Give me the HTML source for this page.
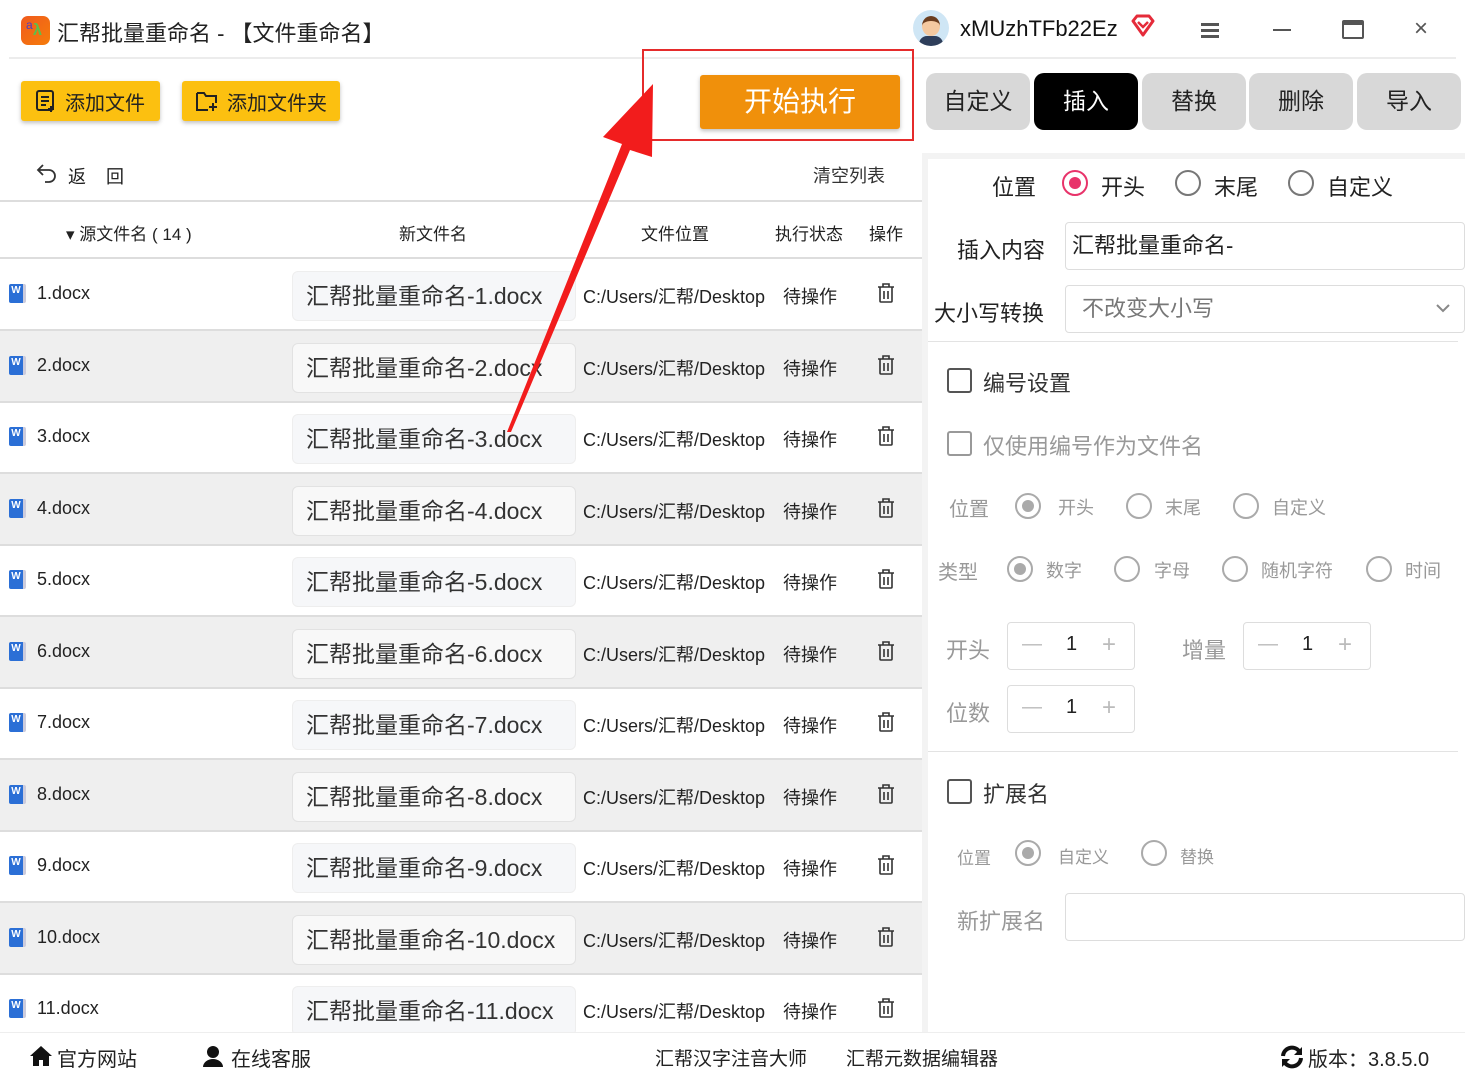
<!DOCTYPE html><html><head><meta charset="utf-8"><style>
*{margin:0;padding:0;box-sizing:border-box}
body{width:1465px;height:1080px;position:relative;overflow:hidden;background:#fff;font-family:"Liberation Sans","Noto Sans CJK SC",sans-serif;color:#222}
.a{position:absolute;white-space:nowrap}
.btnY{position:absolute;background:#fcc010;border-radius:3px;box-shadow:0 2px 4px rgba(0,0,0,.25);font-size:20px;display:flex;align-items:center;color:#222}
.row{position:absolute;left:0;width:922px;height:72px;border-bottom:2px solid #ddd}
.row.g{background:#efefef}
.row .ic{position:absolute;left:9px;top:25px;width:17px;height:19px;background:#2b6fd6;border-radius:2px;border-right:3px solid #ccd;color:#fff;font-size:10px;font-weight:bold;text-align:center;line-height:14px}
.row .fn{position:absolute;left:37px;top:24px;font-size:18px}
.row .nb{position:absolute;left:292px;top:12px;width:284px;height:50px;border-radius:6px;background:#f6f7f9;border:1px solid #eee;font-size:23px;padding-left:13px;line-height:48px;color:#333}
.row.g .nb{background:#f8f8f8;border-color:#e2e2e2}
.row .loc{position:absolute;left:583px;top:24px;font-size:18px}
.row .st{position:absolute;left:783px;top:24px;font-size:18px}
.row .tr{position:absolute;left:877px;top:24px}
.tab{position:absolute;top:73px;height:57px;width:104px;background:#d8d8d8;border-radius:10px;font-size:23px;text-align:center;line-height:57px;color:#222}
.rad{position:absolute;width:26px;height:26px;border:2.5px solid #777;border-radius:50%}
.rad.on{border-color:#e8336a}
.rad.on::after{content:"";position:absolute;left:4.5px;top:4.5px;width:12px;height:12px;border-radius:50%;background:#e8336a}
.rad.gr{border-color:#aaa}
.rad.gon{border-color:#aaa}
.rad.gon::after{content:"";position:absolute;left:4.5px;top:4.5px;width:12px;height:12px;border-radius:50%;background:#aaa}
.cb{position:absolute;width:25px;height:25px;border:2.5px solid #555;border-radius:3px}
.gray{color:#999}
.spin{position:absolute;width:128px;height:48px;border:1px solid #ddd;border-radius:4px;font-size:20px;color:#bbb}
.spin span{position:absolute;top:10px}
</style></head><body>
<!-- title bar -->
<div class="a" style="left:21px;top:16px;width:29px;height:29px;border-radius:7px;background:linear-gradient(135deg,#f05a1e,#f57c0a)"><span style="position:absolute;left:5px;top:2px;color:#4a3cc8;font-size:12px">a</span><span style="position:absolute;left:12px;top:6px;color:#5cc04a;font-size:16px;font-weight:bold">λ</span></div>
<div class="a" style="left:57px;top:16px;font-size:22px;color:#222">汇帮批量重命名 - 【文件重命名】</div>
<div class="a" style="left:913px;top:10px;width:36px;height:36px;border-radius:50%;background:#cfe6f5;overflow:hidden"><div style="position:absolute;left:9px;top:6px;width:18px;height:20px;border-radius:50%;background:#f4c9a0;border-top:5px solid #6b3d1e"></div><div style="position:absolute;left:6px;top:26px;width:24px;height:14px;border-radius:8px 8px 0 0;background:#2e3e5a"></div></div>
<div class="a" style="left:960px;top:16px;font-size:22px;color:#111">xMUzhTFb22Ez</div>
<svg class="a" style="left:1130px;top:13px" width="26" height="26" viewBox="0 0 26 26"><path d="M3 8 L7 3 H19 L23 8 L13 22 Z" fill="none" stroke="#e52b3a" stroke-width="3" stroke-linejoin="round"/><path d="M8 9 L13 14 L18 9" fill="none" stroke="#e52b3a" stroke-width="2.5"/></svg>
<div class="a" style="left:1201px;top:23px;width:18px;height:2.5px;background:#555;box-shadow:0 6px 0 #555,0 12px 0 #555"></div>
<div class="a" style="left:1273px;top:29px;width:18px;height:2px;background:#555"></div>
<div class="a" style="left:1342px;top:20px;width:22px;height:19px;border:2px solid #555;border-top-width:5px;border-radius:2px"></div>
<div class="a" style="left:1414px;top:15px;font-size:24px;color:#555">×</div>
<div class="a" style="left:9px;top:57px;width:1447px;height:2px;background:#ececec"></div>
<!-- buttons -->
<div class="btnY" style="left:21px;top:81px;width:139px;height:40px"><svg style="margin:0 8px 0 14px" width="22" height="24" viewBox="0 0 22 24"><rect x="2" y="2" width="16" height="19" rx="2" fill="none" stroke="#222" stroke-width="2"/><path d="M6 8h8M6 12h8M6 16h5M16 17v6M13 20h6" stroke="#222" stroke-width="2"/></svg>添加文件</div>
<div class="btnY" style="left:182px;top:81px;width:158px;height:40px"><svg style="margin:0 8px 0 13px" width="24" height="24" viewBox="0 0 24 24"><path d="M2 4h7l2 3h10v7M2 4v17h11" fill="none" stroke="#222" stroke-width="2"/><path d="M18 14v8M14 18h8" stroke="#222" stroke-width="2"/></svg>添加文件夹</div>
<div class="a" style="left:700px;top:75px;width:200px;height:54px;background:#f0900b;border-radius:3px;box-shadow:0 2px 4px rgba(0,0,0,.25);color:#fff;font-size:28px;text-align:center;line-height:54px">开始执行</div>
<div class="a" style="left:642px;top:49px;width:272px;height:92px;border:2px solid #e52b2b"></div>
<!-- back -->
<svg class="a" style="left:36px;top:163px" width="22" height="20" viewBox="0 0 22 20"><path d="M7 2 L2 7 L7 12 M2 7 H13 a6 6 0 0 1 0 12 H9" fill="none" stroke="#333" stroke-width="1.8"/></svg>
<div class="a" style="left:68px;top:163px;font-size:18px">返</div>
<div class="a" style="left:106px;top:163px;font-size:18px">回</div>
<div class="a" style="left:813px;top:162px;font-size:18px;color:#333">清空列表</div>
<div class="a" style="left:0;top:200px;width:922px;height:2px;background:#ddd"></div>
<div class="a" style="left:66px;top:220px;font-size:17px">▾ 源文件名 ( 14 )</div>
<div class="a" style="left:399px;top:220px;font-size:17px">新文件名</div>
<div class="a" style="left:641px;top:220px;font-size:17px">文件位置</div>
<div class="a" style="left:775px;top:220px;font-size:17px">执行状态</div>
<div class="a" style="left:869px;top:220px;font-size:17px">操作</div>
<div class="a" style="left:0;top:257px;width:922px;height:2px;background:#ddd"></div>
<!-- rows -->
<div class="row" style="top:259px"><div class="ic">W</div><div class="fn">1.docx</div><div class="nb">汇帮批量重命名-1.docx</div><div class="loc">C:/Users/汇帮/Desktop</div><div class="st">待操作</div><svg class="tr" width="18" height="20" viewBox="0 0 18 20"><path d="M1 4h16M6 4V1h6v3M3 4v14a1 1 0 0 0 1 1h10a1 1 0 0 0 1-1V4M7 8v8M11 8v8" fill="none" stroke="#333" stroke-width="1.6"/></svg></div>
<div class="row g" style="top:330.5px"><div class="ic">W</div><div class="fn">2.docx</div><div class="nb">汇帮批量重命名-2.docx</div><div class="loc">C:/Users/汇帮/Desktop</div><div class="st">待操作</div><svg class="tr" width="18" height="20" viewBox="0 0 18 20"><path d="M1 4h16M6 4V1h6v3M3 4v14a1 1 0 0 0 1 1h10a1 1 0 0 0 1-1V4M7 8v8M11 8v8" fill="none" stroke="#333" stroke-width="1.6"/></svg></div>
<div class="row" style="top:402px"><div class="ic">W</div><div class="fn">3.docx</div><div class="nb">汇帮批量重命名-3.docx</div><div class="loc">C:/Users/汇帮/Desktop</div><div class="st">待操作</div><svg class="tr" width="18" height="20" viewBox="0 0 18 20"><path d="M1 4h16M6 4V1h6v3M3 4v14a1 1 0 0 0 1 1h10a1 1 0 0 0 1-1V4M7 8v8M11 8v8" fill="none" stroke="#333" stroke-width="1.6"/></svg></div>
<div class="row g" style="top:473.5px"><div class="ic">W</div><div class="fn">4.docx</div><div class="nb">汇帮批量重命名-4.docx</div><div class="loc">C:/Users/汇帮/Desktop</div><div class="st">待操作</div><svg class="tr" width="18" height="20" viewBox="0 0 18 20"><path d="M1 4h16M6 4V1h6v3M3 4v14a1 1 0 0 0 1 1h10a1 1 0 0 0 1-1V4M7 8v8M11 8v8" fill="none" stroke="#333" stroke-width="1.6"/></svg></div>
<div class="row" style="top:545px"><div class="ic">W</div><div class="fn">5.docx</div><div class="nb">汇帮批量重命名-5.docx</div><div class="loc">C:/Users/汇帮/Desktop</div><div class="st">待操作</div><svg class="tr" width="18" height="20" viewBox="0 0 18 20"><path d="M1 4h16M6 4V1h6v3M3 4v14a1 1 0 0 0 1 1h10a1 1 0 0 0 1-1V4M7 8v8M11 8v8" fill="none" stroke="#333" stroke-width="1.6"/></svg></div>
<div class="row g" style="top:616.5px"><div class="ic">W</div><div class="fn">6.docx</div><div class="nb">汇帮批量重命名-6.docx</div><div class="loc">C:/Users/汇帮/Desktop</div><div class="st">待操作</div><svg class="tr" width="18" height="20" viewBox="0 0 18 20"><path d="M1 4h16M6 4V1h6v3M3 4v14a1 1 0 0 0 1 1h10a1 1 0 0 0 1-1V4M7 8v8M11 8v8" fill="none" stroke="#333" stroke-width="1.6"/></svg></div>
<div class="row" style="top:688px"><div class="ic">W</div><div class="fn">7.docx</div><div class="nb">汇帮批量重命名-7.docx</div><div class="loc">C:/Users/汇帮/Desktop</div><div class="st">待操作</div><svg class="tr" width="18" height="20" viewBox="0 0 18 20"><path d="M1 4h16M6 4V1h6v3M3 4v14a1 1 0 0 0 1 1h10a1 1 0 0 0 1-1V4M7 8v8M11 8v8" fill="none" stroke="#333" stroke-width="1.6"/></svg></div>
<div class="row g" style="top:759.5px"><div class="ic">W</div><div class="fn">8.docx</div><div class="nb">汇帮批量重命名-8.docx</div><div class="loc">C:/Users/汇帮/Desktop</div><div class="st">待操作</div><svg class="tr" width="18" height="20" viewBox="0 0 18 20"><path d="M1 4h16M6 4V1h6v3M3 4v14a1 1 0 0 0 1 1h10a1 1 0 0 0 1-1V4M7 8v8M11 8v8" fill="none" stroke="#333" stroke-width="1.6"/></svg></div>
<div class="row" style="top:831px"><div class="ic">W</div><div class="fn">9.docx</div><div class="nb">汇帮批量重命名-9.docx</div><div class="loc">C:/Users/汇帮/Desktop</div><div class="st">待操作</div><svg class="tr" width="18" height="20" viewBox="0 0 18 20"><path d="M1 4h16M6 4V1h6v3M3 4v14a1 1 0 0 0 1 1h10a1 1 0 0 0 1-1V4M7 8v8M11 8v8" fill="none" stroke="#333" stroke-width="1.6"/></svg></div>
<div class="row g" style="top:902.5px"><div class="ic">W</div><div class="fn">10.docx</div><div class="nb">汇帮批量重命名-10.docx</div><div class="loc">C:/Users/汇帮/Desktop</div><div class="st">待操作</div><svg class="tr" width="18" height="20" viewBox="0 0 18 20"><path d="M1 4h16M6 4V1h6v3M3 4v14a1 1 0 0 0 1 1h10a1 1 0 0 0 1-1V4M7 8v8M11 8v8" fill="none" stroke="#333" stroke-width="1.6"/></svg></div>
<div class="row" style="top:974px"><div class="ic">W</div><div class="fn">11.docx</div><div class="nb">汇帮批量重命名-11.docx</div><div class="loc">C:/Users/汇帮/Desktop</div><div class="st">待操作</div><svg class="tr" width="18" height="20" viewBox="0 0 18 20"><path d="M1 4h16M6 4V1h6v3M3 4v14a1 1 0 0 0 1 1h10a1 1 0 0 0 1-1V4M7 8v8M11 8v8" fill="none" stroke="#333" stroke-width="1.6"/></svg></div>
<!-- arrow -->
<svg class="a" style="left:0;top:0" width="922" height="460" viewBox="0 0 922 460"><polygon points="507,432 511,432 630,150 652,157 653,84 603,137 622,144" fill="#f21c1c"/></svg>
<!-- right panel -->
<div class="tab" style="left:926px">自定义</div>
<div class="tab" style="left:1034px;background:#000;color:#fff">插入</div>
<div class="tab" style="left:1142px">替换</div>
<div class="tab" style="left:1249px">删除</div>
<div class="tab" style="left:1357px">导入</div>
<div class="a" style="left:922px;top:153px;width:543px;height:880px;background:#f3f3f3"></div>
<div class="a" style="left:928px;top:159px;width:537px;height:873px;background:#fff"></div>
<div class="a" style="left:992px;top:170px;font-size:22px">位置</div>
<div class="rad on" style="left:1062px;top:170px"></div><div class="a" style="left:1101px;top:170px;font-size:22px">开头</div>
<div class="rad" style="left:1175px;top:170px"></div><div class="a" style="left:1214px;top:170px;font-size:22px">末尾</div>
<div class="rad" style="left:1288px;top:170px"></div><div class="a" style="left:1327px;top:170px;font-size:22px">自定义</div>
<div class="a" style="left:957px;top:233px;font-size:22px">插入内容</div>
<div class="a" style="left:1065px;top:222px;width:400px;height:48px;border:1px solid #ddd;border-radius:4px;font-size:22px;padding-left:6px;line-height:46px">汇帮批量重命名-</div>
<div class="a" style="left:934px;top:296px;font-size:22px">大小写转换</div>
<div class="a" style="left:1065px;top:285px;width:400px;height:48px;border:1px solid #ddd;border-radius:4px;font-size:22px;padding-left:16px;line-height:46px;color:#777">不改变大小写</div>
<svg class="a" style="left:1436px;top:303px" width="14" height="10" viewBox="0 0 14 10"><path d="M1 2 L7 8 L13 2" fill="none" stroke="#888" stroke-width="2"/></svg>
<div class="a" style="left:928px;top:341px;width:530px;height:1px;background:#e3e3e3"></div>
<div class="cb" style="left:947px;top:368px"></div><div class="a" style="left:983px;top:366px;font-size:22px;color:#333">编号设置</div>
<div class="cb" style="left:947px;top:431px;border-color:#999"></div><div class="a gray" style="left:983px;top:429px;font-size:22px">仅使用编号作为文件名</div>
<div class="a gray" style="left:949px;top:493px;font-size:20px">位置</div>
<div class="rad gon" style="left:1015px;top:493px"></div><div class="a gray" style="left:1058px;top:494px;font-size:18px">开头</div>
<div class="rad gr" style="left:1126px;top:493px"></div><div class="a gray" style="left:1165px;top:494px;font-size:18px">末尾</div>
<div class="rad gr" style="left:1233px;top:493px"></div><div class="a gray" style="left:1272px;top:494px;font-size:18px">自定义</div>
<div class="a gray" style="left:938px;top:556px;font-size:20px">类型</div>
<div class="rad gon" style="left:1007px;top:556px"></div><div class="a gray" style="left:1046px;top:557px;font-size:18px">数字</div>
<div class="rad gr" style="left:1114px;top:556px"></div><div class="a gray" style="left:1154px;top:557px;font-size:18px">字母</div>
<div class="rad gr" style="left:1222px;top:556px"></div><div class="a gray" style="left:1261px;top:557px;font-size:18px">随机字符</div>
<div class="rad gr" style="left:1366px;top:556px"></div><div class="a gray" style="left:1405px;top:557px;font-size:18px">时间</div>
<div class="a gray" style="left:946px;top:633px;font-size:22px">开头</div>
<div class="spin" style="left:1007px;top:622px"><span style="left:14px">—</span><span style="left:58px;color:#222">1</span><span style="left:94px;font-size:24px;top:8px">+</span></div>
<div class="a gray" style="left:1182px;top:633px;font-size:22px">增量</div>
<div class="spin" style="left:1243px;top:622px"><span style="left:14px">—</span><span style="left:58px;color:#222">1</span><span style="left:94px;font-size:24px;top:8px">+</span></div>
<div class="a gray" style="left:946px;top:696px;font-size:22px">位数</div>
<div class="spin" style="left:1007px;top:685px"><span style="left:14px">—</span><span style="left:58px;color:#222">1</span><span style="left:94px;font-size:24px;top:8px">+</span></div>
<div class="a" style="left:928px;top:751px;width:530px;height:1px;background:#e3e3e3"></div>
<div class="cb" style="left:947px;top:779px"></div><div class="a" style="left:983px;top:777px;font-size:22px;color:#333">扩展名</div>
<div class="a gray" style="left:957px;top:844px;font-size:17px">位置</div>
<div class="rad gon" style="left:1015px;top:840px"></div><div class="a gray" style="left:1058px;top:843px;font-size:17px">自定义</div>
<div class="rad gr" style="left:1141px;top:840px"></div><div class="a gray" style="left:1180px;top:843px;font-size:17px">替换</div>
<div class="a gray" style="left:957px;top:904px;font-size:22px">新扩展名</div>
<div class="a" style="left:1065px;top:893px;width:400px;height:48px;border:1px solid #ddd;border-radius:4px"></div>
<!-- footer -->
<div class="a" style="left:0;top:1032px;width:1465px;height:48px;background:#fff;border-top:1px solid #eee"></div>
<svg class="a" style="left:29px;top:1044px" width="24" height="24" viewBox="0 0 24 24"><path d="M12 2 L1 12 h3 v10 h6 v-6 h4 v6 h6 V12 h3 Z" fill="#111"/></svg>
<div class="a" style="left:57px;top:1043px;font-size:20px">官方网站</div>
<svg class="a" style="left:201px;top:1044px" width="24" height="24" viewBox="0 0 24 24"><circle cx="12" cy="8" r="6" fill="#111"/><path d="M2 23 a10 8 0 0 1 20 0 Z" fill="#111"/></svg>
<div class="a" style="left:231px;top:1043px;font-size:20px">在线客服</div>
<div class="a" style="left:655px;top:1044px;font-size:19px">汇帮汉字注音大师</div>
<div class="a" style="left:846px;top:1044px;font-size:19px">汇帮元数据编辑器</div>
<svg class="a" style="left:1280px;top:1045px" width="24" height="24" viewBox="0 0 24 24"><path d="M3 11 A9 9 0 0 1 19 6 M21 13 A9 9 0 0 1 5 18" fill="none" stroke="#111" stroke-width="4"/><path d="M22 2 v8 h-8 Z M2 22 v-8 h8 Z" fill="#111"/></svg>
<div class="a" style="left:1308px;top:1043px;font-size:20px">版本：3.8.5.0</div>
</body></html>
